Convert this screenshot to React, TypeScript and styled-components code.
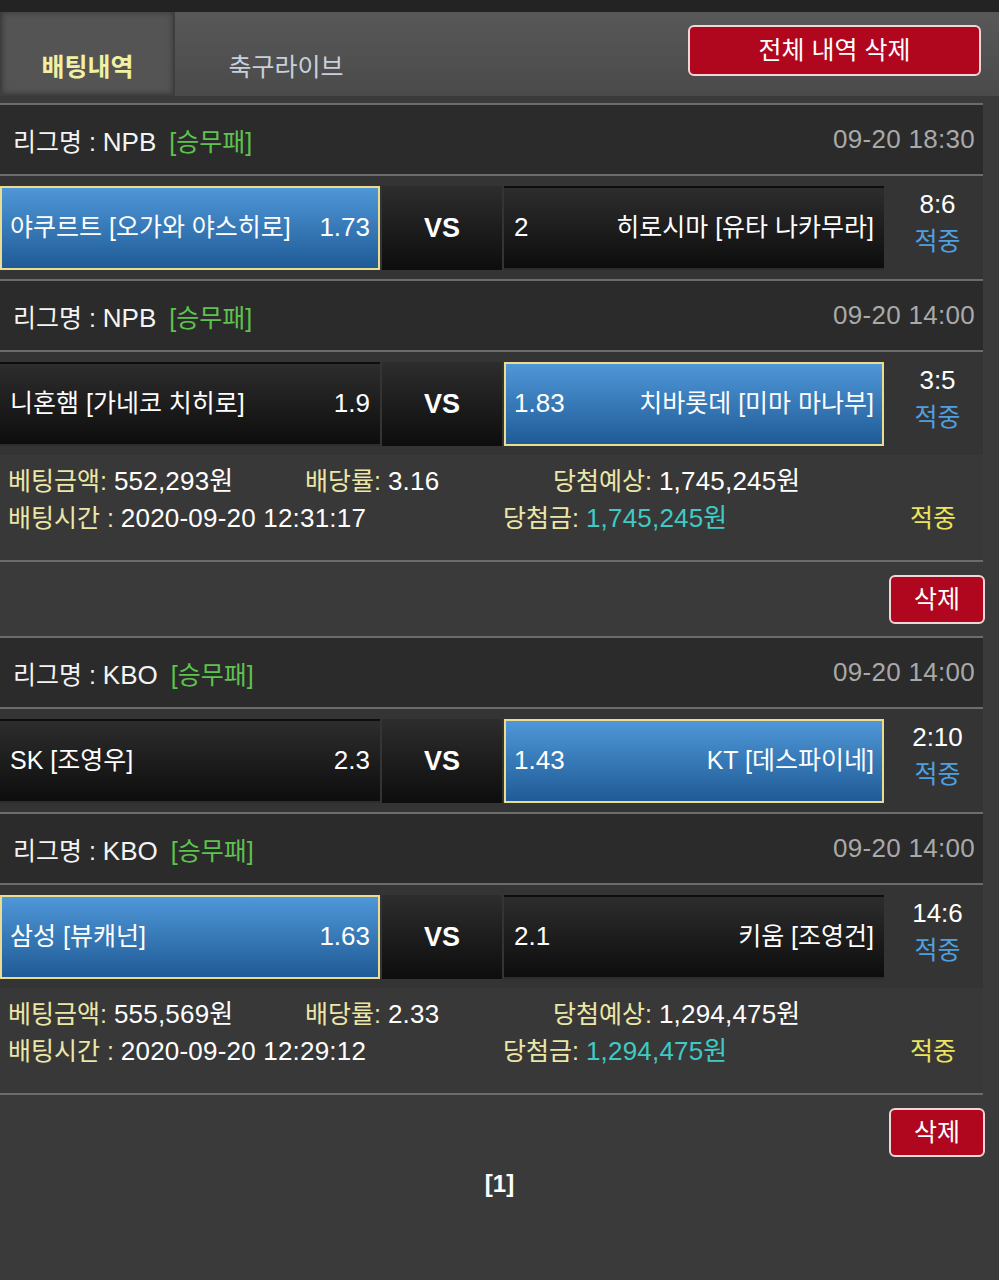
import styled, { createGlobalStyle } from 'styled-components';

type Side = 'home' | 'away';

interface IMatch {
  league: string;
  date: string;
  home: string;
  homeOdds: string;
  away: string;
  awayOdds: string;
  pick: Side;
  score: string;
}

interface IBet {
  matches: IMatch[];
  amount: string;
  rate: string;
  expected: string;
  time: string;
  won: string;
}

const bets: IBet[] = [
  {
    matches: [
      {
        league: 'NPB',
        date: '09-20 18:30',
        home: '야쿠르트 [오가와 야스히로]',
        homeOdds: '1.73',
        away: '히로시마 [유타 나카무라]',
        awayOdds: '2',
        pick: 'home',
        score: '8:6',
      },
      {
        league: 'NPB',
        date: '09-20 14:00',
        home: '니혼햄 [가네코 치히로]',
        homeOdds: '1.9',
        away: '치바롯데 [미마 마나부]',
        awayOdds: '1.83',
        pick: 'away',
        score: '3:5',
      },
    ],
    amount: '552,293원',
    rate: '3.16',
    expected: '1,745,245원',
    time: '2020-09-20 12:31:17',
    won: '1,745,245원',
  },
  {
    matches: [
      {
        league: 'KBO',
        date: '09-20 14:00',
        home: 'SK [조영우]',
        homeOdds: '2.3',
        away: 'KT [데스파이네]',
        awayOdds: '1.43',
        pick: 'away',
        score: '2:10',
      },
      {
        league: 'KBO',
        date: '09-20 14:00',
        home: '삼성 [뷰캐넌]',
        homeOdds: '1.63',
        away: '키움 [조영건]',
        awayOdds: '2.1',
        pick: 'home',
        score: '14:6',
      },
    ],
    amount: '555,569원',
    rate: '2.33',
    expected: '1,294,475원',
    time: '2020-09-20 12:29:12',
    won: '1,294,475원',
  },
];

/* global */
const GlobalStyle = createGlobalStyle`
  html, body {
    margin: 0;
    padding: 0;
    background: #3a3a3a;
  }
  body {
    font-family: "Liberation Sans", "Noto Sans CJK KR", Arial, sans-serif;
    color: #fff;
    font-size: 25px;
  }
`;

const Page = styled.div`
  width: 999px;
  min-height: 1280px;
  background: #3a3a3a;
`;

const TopStrip = styled.div`
  height: 12px;
  background: #232323;
`;

/* tabs */
const TabBar = styled.div`
  height: 84px;
  display: flex;
  align-items: stretch;
  background: linear-gradient(#585858, #4a4a4a);
`;

const Tab = styled.div<{ active?: boolean }>`
  width: ${(p) => (p.active ? '175px' : '222px')};
  box-sizing: border-box;
  display: flex;
  align-items: flex-end;
  justify-content: center;
  padding-bottom: ${(p) => (p.active ? '11px' : '13px')};
  font-size: 25px;
  font-weight: ${(p) => (p.active ? 'bold' : 'normal')};
  color: ${(p) => (p.active ? '#f2f0a2' : '#c9d0dc')};
  background: ${(p) => (p.active ? '#545454' : 'transparent')};
  border: ${(p) => (p.active ? '2px solid #3e3e3e' : 'none')};
  border-top: none;
  box-shadow: ${(p) => (p.active ? 'inset 0 0 6px rgba(0,0,0,0.35)' : 'none')};
`;

const TabSpacer = styled.div`
  flex: 1;
  display: flex;
  justify-content: flex-end;
  align-items: flex-start;
  padding: 13px 18px 0 0;
`;

const RedButton = styled.button<{ wide?: boolean }>`
  width: ${(p) => (p.wide ? '293px' : '96px')};
  height: ${(p) => (p.wide ? '51px' : '49px')};
  margin-right: ${(p) => (p.wide ? '0' : '-2px')};
  background: #b0061e;
  border: 2px solid #f0d6d6;
  border-radius: 6px;
  color: #fff;
  font-family: inherit;
  font-size: 25px;
  line-height: 30px;
  padding: 0 0 2px;
  cursor: pointer;
`;

/* list */
const List = styled.div`
  padding-top: 7px;
`;

const Card = styled.div`
  width: 983px;
`;

const LeagueHeader = styled.div`
  height: 69px;
  display: flex;
  align-items: center;
  justify-content: space-between;
  padding: 0 8px 0 13px;
  background: #2b2b2b;
  border-top: 2px solid #6c6c6c;
  border-bottom: 2px solid #6c6c6c;
`;

const LeagueName = styled.span`
  color: #f4f4f4;
`;

const Num = styled.span`
  font-size: 26px;
`;

const Kind = styled.span`
  color: #5ec24e;
  margin-left: 13px;
`;

const DateText = styled.span`
  color: #a9a9a9;
  font-size: 26px;
  letter-spacing: 0.3px;
`;

const MatchRow = styled.div`
  display: flex;
  gap: 2px;
  padding: 10px 0 8px;
  background: #343434;
`;

const TeamCell = styled.div<{ picked: boolean; side: Side }>`
  width: 380px;
  height: 84px;
  box-sizing: border-box;
  display: flex;
  align-items: center;
  justify-content: space-between;
  flex-direction: ${(p) => (p.side === 'away' ? 'row-reverse' : 'row')};
  padding: 0 8px 3px 8px;
  line-height: 30px;
  background: ${(p) =>
    p.picked
      ? 'linear-gradient(#4f97d8, #1f5b96)'
      : 'linear-gradient(#2d2d2d, #0d0d0d)'};
  border: 2px solid ${(p) => (p.picked ? '#ecdc92' : 'transparent')};
  color: #fff;
  white-space: nowrap;
`;

const Odds = styled.span`
  font-size: 26px;
`;

const VsCell = styled.div`
  width: 120px;
  height: 84px;
  display: flex;
  align-items: center;
  justify-content: center;
  background: linear-gradient(#2d2d2d, #0d0d0d);
  font-size: 27px;
  font-weight: bold;
`;

const ScoreCol = styled.div`
  flex: 1;
  display: flex;
  flex-direction: column;
  align-items: center;
  justify-content: center;
  line-height: 37px;
  padding: 0 0 11px 6px;
`;

const Score = styled.span`
  font-size: 26px;
`;

const Hit = styled.span<{ tone: 'blue' | 'yellow' }>`
  color: ${(p) => (p.tone === 'blue' ? '#4e9fe0' : '#ece35e')};
`;

const Details = styled.div`
  background: #383838;
  padding: 8px 0 23px 8px;
  line-height: 37px;
`;

const DetailLine = styled.div`
  display: flex;
  white-space: nowrap;
`;

const Field = styled.div<{ w?: number }>`
  width: ${(p) => (p.w ? `${p.w}px` : 'auto')};
  flex: ${(p) => (p.w ? 'none' : '1')};
`;

const Label = styled.span`
  color: #ece7a6;
`;

const Value = styled.span<{ teal?: boolean }>`
  color: ${(p) => (p.teal ? '#3fcac4' : '#fff')};
  font-size: 26px;
  letter-spacing: 0.2px;
`;

const DeleteRow = styled.div`
  display: flex;
  justify-content: flex-end;
  padding: 13px 0 12px;
  border-top: 2px solid #6c6c6c;
`;

const Pager = styled.div`
  text-align: center;
  font-weight: bold;
  font-size: 24px;
  padding-top: 1px;
`;

function Match({ m }: { m: IMatch }) {
  return (
    <>
      <LeagueHeader>
        <span>
          <LeagueName>
            리그명 : <Num>{m.league}</Num>
          </LeagueName>
          <Kind>[승무패]</Kind>
        </span>
        <DateText>{m.date}</DateText>
      </LeagueHeader>
      <MatchRow>
        <TeamCell picked={m.pick === 'home'} side="home">
          <span>{m.home}</span>
          <Odds>{m.homeOdds}</Odds>
        </TeamCell>
        <VsCell>VS</VsCell>
        <TeamCell picked={m.pick === 'away'} side="away">
          <span>{m.away}</span>
          <Odds>{m.awayOdds}</Odds>
        </TeamCell>
        <ScoreCol>
          <Score>{m.score}</Score>
          <Hit tone="blue">적중</Hit>
        </ScoreCol>
      </MatchRow>
    </>
  );
}

export default function App() {
  return (
    <Page>
      <GlobalStyle />
      <TopStrip />
      <TabBar>
        <Tab active>배팅내역</Tab>
        <Tab>축구라이브</Tab>
        <TabSpacer>
          <RedButton wide>전체 내역 삭제</RedButton>
        </TabSpacer>
      </TabBar>
      <List>
        {bets.map((b, i) => (
          <Card key={i}>
            {b.matches.map((m, j) => (
              <Match key={j} m={m} />
            ))}
            <Details>
              <DetailLine>
                <Field w={297}>
                  <Label>베팅금액: </Label>
                  <Value>{b.amount}</Value>
                </Field>
                <Field w={248}>
                  <Label>배당률: </Label>
                  <Value>{b.rate}</Value>
                </Field>
                <Field>
                  <Label>당첨예상: </Label>
                  <Value>{b.expected}</Value>
                </Field>
              </DetailLine>
              <DetailLine>
                <Field w={495}>
                  <Label>배팅시간 : </Label>
                  <Value>{b.time}</Value>
                </Field>
                <Field w={407}>
                  <Label>당첨금: </Label>
                  <Value teal>{b.won}</Value>
                </Field>
                <Field>
                  <Hit tone="yellow">적중</Hit>
                </Field>
              </DetailLine>
            </Details>
            <DeleteRow>
              <RedButton>삭제</RedButton>
            </DeleteRow>
          </Card>
        ))}
        <Pager>[1]</Pager>
      </List>
    </Page>
  );
}
